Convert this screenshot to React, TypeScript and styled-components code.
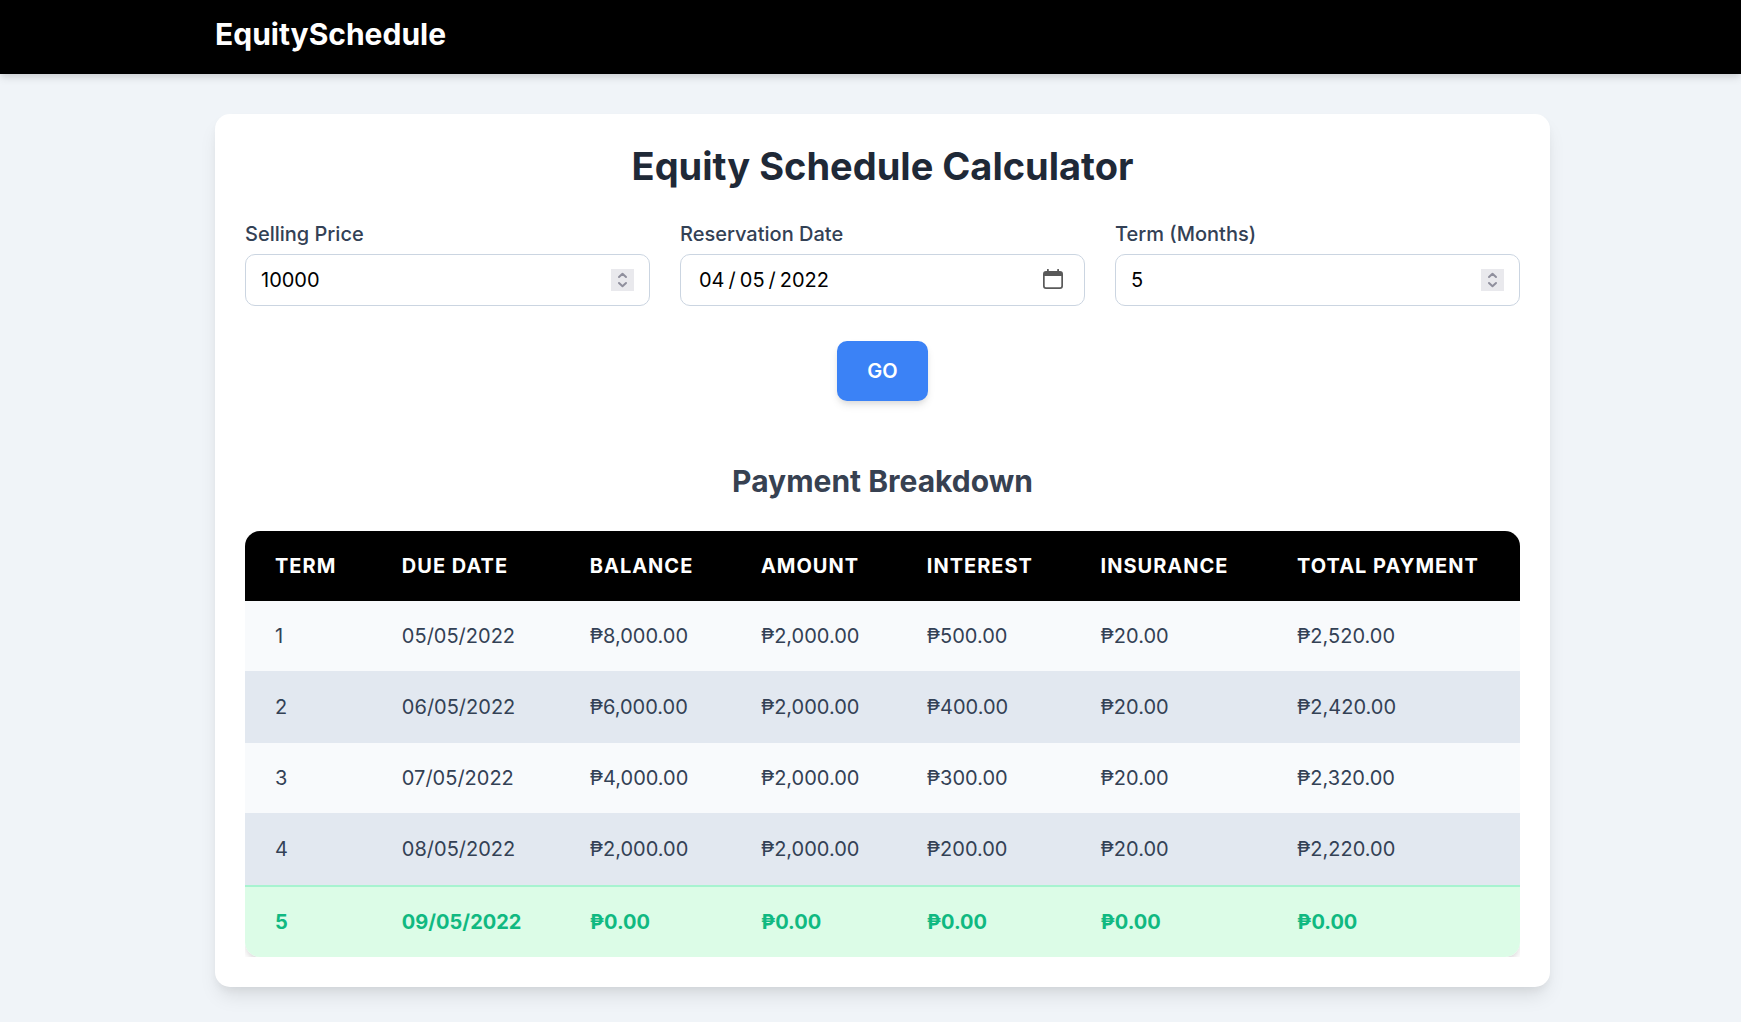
import React, { useState } from 'react';
import styled, { createGlobalStyle } from 'styled-components';

const GlobalStyle = createGlobalStyle`
  *, *::before, *::after { box-sizing: border-box; }
  body {
    margin: 0;
    min-height: 100vh;
    background: #f0f4f8;
    color: #334155;
    font-family: Inter, "Liberation Sans", sans-serif;
    font-size: 20px;
    line-height: 30px;
  }
`;

const NavBar = styled.nav`
  padding: 14px 0 20px 24px;
  background: #000;
  box-shadow: 0 5px 8px -1px rgba(0, 0, 0, 0.1), 0 3px 5px -1px rgba(0, 0, 0, 0.06);
`;

const Container = styled.div`
  width: 100%;
  max-width: 1335px;
  margin: 0 auto;
`;

const Brand = styled.a`
  display: block;
  width: fit-content;
  color: #fff;
  font-size: 30px;
  font-weight: 700;
  line-height: 40px;
  text-decoration: none;
`;

const Main = styled.main`
  padding: 40px 0 30px 24px;
`;

const Card = styled(Container)`
  padding: 30px;
  border-radius: 15px;
  background: #fff;
  box-shadow: 0 12px 20px -4px rgba(0, 0, 0, 0.1), 0 5px 8px -2px rgba(0, 0, 0, 0.05);
`;

const Title = styled.h1`
  margin: 0 0 30px;
  color: #1f2937;
  font-size: 38px;
  font-weight: 700;
  line-height: 45px;
  text-align: center;
`;

const Subtitle = styled.h2`
  margin: 60px 0 30px;
  color: #374151;
  font-size: 30px;
  font-weight: 700;
  line-height: 40px;
  text-align: center;
`;

const Fields = styled.div`
  display: grid;
  grid-template-columns: repeat(3, minmax(0, 1fr));
  gap: 30px;
`;

const Field = styled.div`
  display: flex;
  flex-direction: column;
  gap: 5px;
`;

const Label = styled.label`
  font-weight: 500;
`;

const InputBox = styled.div`
  position: relative;
`;

const Input = styled.input`
  display: block;
  width: 100%;
  height: 52px;
  padding: 10px 15px;
  border: 1px solid #cbd5e1;
  border-radius: 10px;
  background: #fff;
  color: #000;
  font: inherit;

  &::-webkit-inner-spin-button {
    width: 23px;
    opacity: 0;
  }
  &::-webkit-calendar-picker-indicator {
    opacity: 0;
  }
  &::-webkit-datetime-edit {
    padding-left: 2px;
  }
  &::-webkit-datetime-edit-text {
    padding: 0 3px;
  }
`;

const SpinnerArt = styled.svg`
  position: absolute;
  top: 15px;
  right: 16px;
  width: 23px;
  height: 22px;
  background: #e9e9ed;
  pointer-events: none;
`;

const CalendarArt = styled.svg`
  position: absolute;
  top: 15px;
  right: 22px;
  width: 20px;
  height: 20px;
  pointer-events: none;
`;

const Spinner = () => (
  <SpinnerArt viewBox="0 0 23 22" aria-hidden="true">
    <path
      d="M8 8 L11.5 4.7 L15 8 M8 14 L11.5 17.3 L15 14"
      fill="none"
      stroke="#8f8f9d"
      strokeWidth="2"
      strokeLinecap="round"
      strokeLinejoin="round"
    />
  </SpinnerArt>
);

const Calendar = () => (
  <CalendarArt viewBox="0 0 20 20" aria-hidden="true">
    <path
      fill="#595959"
      fillRule="evenodd"
      d="M4 0.8a0.8 0.8 0 0 1 1.8 0V2H14.2V0.8a0.8 0.8 0 0 1 1.8 0V2H17a3 3 0 0 1 3 3V17a3 3 0 0 1-3 3H3a3 3 0 0 1-3-3V5a3 3 0 0 1 3-3H4Z M1.7 7V17a1.3 1.3 0 0 0 1.3 1.3H17a1.3 1.3 0 0 0 1.3-1.3V7Z"
    />
  </CalendarArt>
);

const Actions = styled.div`
  display: flex;
  justify-content: center;
  margin-top: 35px;
`;

const GoButton = styled.button`
  padding: 15px 30px;
  border: 0;
  border-radius: 10px;
  background: #3b82f6;
  color: #fff;
  font: inherit;
  font-weight: 600;
  cursor: pointer;
  box-shadow: 0 5px 8px -1px rgba(0, 0, 0, 0.1), 0 3px 5px -1px rgba(0, 0, 0, 0.06);
`;

const TableWrap = styled.div`
  overflow-x: auto;
`;

const Table = styled.table`
  width: 100%;
  border-spacing: 0;
  border-radius: 15px;
  overflow: hidden;
  text-align: left;
  box-shadow: 0 5px 8px -1px rgba(0, 0, 0, 0.1), 0 3px 5px -1px rgba(0, 0, 0, 0.06);
`;

const HeadCell = styled.th`
  padding: 20px 30px;
  background: #000;
  color: #fff;
  font-weight: 700;
  letter-spacing: 1px;
  text-transform: uppercase;
`;

const Cell = styled.td`
  padding: 20px 30px;
  border-bottom: 1px solid #e2e8f0;
`;

const Row = styled.tr<{ $last: boolean }>`
  background: #f8fafc;

  &:nth-child(even) {
    background: #e2e8f0;
  }

  ${({ $last }) =>
    $last &&
    `
    &, &:nth-child(even) {
      background: #dcfce7;
      color: #10b981;
      font-weight: 700;
    }
    td {
      border-top: 2px solid #a7f3d0;
      border-bottom: 0;
    }
  `}
`;

const columns = ['Term', 'Due Date', 'Balance', 'Amount', 'Interest', 'Insurance', 'Total Payment'];

const peso = (value: number) =>
  '₱' + value.toLocaleString('en-US', { minimumFractionDigits: 2, maximumFractionDigits: 2 });

function buildSchedule(price: number, date: string, term: number): string[][] {
  const [year, month, day] = date.split('-').map(Number);
  const amount = price / term;
  return Array.from({ length: term }, (_, i) => {
    const last = i === term - 1;
    const due = new Date(year, month + i, day);
    const dueText = due.toLocaleDateString('en-US', {
      month: '2-digit',
      day: '2-digit',
      year: 'numeric',
    });
    const interest = (price - amount * i) * 0.05;
    const figures = last
      ? [0, 0, 0, 0, 0]
      : [price - amount * (i + 1), amount, interest, 20, amount + interest + 20];
    return [String(i + 1), dueText, ...figures.map(peso)];
  });
}

export default function App() {
  const [price, setPrice] = useState('10000');
  const [date, setDate] = useState('2022-04-05');
  const [term, setTerm] = useState('5');
  const [rows, setRows] = useState(() => buildSchedule(10000, '2022-04-05', 5));

  const submit = (event: React.FormEvent) => {
    event.preventDefault();
    setRows(buildSchedule(Number(price), date, Number(term)));
  };

  return (
    <>
      <GlobalStyle />
      <NavBar>
        <Container>
          <Brand href="#">EquitySchedule</Brand>
        </Container>
      </NavBar>
      <Main>
        <Card>
          <Title>Equity Schedule Calculator</Title>
          <form onSubmit={submit}>
            <Fields>
              <Field>
                <Label htmlFor="price">Selling Price</Label>
                <InputBox>
                  <Input id="price" type="number" required value={price} onChange={(e) => setPrice(e.target.value)} />
                  <Spinner />
                </InputBox>
              </Field>
              <Field>
                <Label htmlFor="date">Reservation Date</Label>
                <InputBox>
                  <Input id="date" type="date" required value={date} onChange={(e) => setDate(e.target.value)} />
                  <Calendar />
                </InputBox>
              </Field>
              <Field>
                <Label htmlFor="term">Term (Months)</Label>
                <InputBox>
                  <Input id="term" type="number" min="1" required value={term} onChange={(e) => setTerm(e.target.value)} />
                  <Spinner />
                </InputBox>
              </Field>
            </Fields>
            <Actions>
              <GoButton type="submit">GO</GoButton>
            </Actions>
          </form>
          <Subtitle>Payment Breakdown</Subtitle>
          <TableWrap>
            <Table>
              <thead>
                <tr>
                  {columns.map((name) => (
                    <HeadCell key={name} scope="col">{name}</HeadCell>
                  ))}
                </tr>
              </thead>
              <tbody>
                {rows.map((cells, i) => (
                  <Row key={cells[0]} $last={i === rows.length - 1}>
                    {cells.map((text, c) => (
                      <Cell key={columns[c]}>{text}</Cell>
                    ))}
                  </Row>
                ))}
              </tbody>
            </Table>
          </TableWrap>
        </Card>
      </Main>
    </>
  );
}
